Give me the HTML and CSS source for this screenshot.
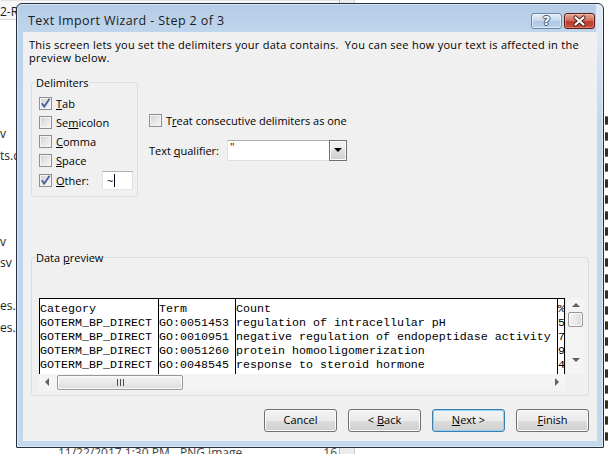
FILE: index.html
```html
<!DOCTYPE html>
<html>
<head>
<meta charset="utf-8">
<title>Text Import Wizard</title>
<link rel="stylesheet" href="styles.css">
</head>
<body>
<div class="desktop">
  <div class="explorer">
    <div class="ex-list-pane">
      <div class="ex-top"><span>2-R</span></div>
      <ul class="ex-list">
        <li>v</li><li>ts.csv</li><li></li><li></li><li></li><li>v</li><li>sv</li><li></li><li>es.xlsx</li><li>es.csv</li>
      </ul>
      <div class="ex-bottom"><span class="ex-date">11/22/2017 1:30 PM</span><span class="ex-type">PNG image</span><span class="ex-size">16</span></div>
    </div>
    <div class="ex-scroll"></div>
    <div class="ex-right"></div>
  </div>

  <div class="dialog">
    <div class="titlebar">
      <span class="title">Text Import Wizard - Step 2 of 3</span>
      <div class="caption-btns">
        <span class="cbtn help">?</span>
        <span class="cbtn close"><svg width="29" height="14" viewBox="0 0 29 14"><path d="M10.5 3.5 L18.5 10.5 M18.5 3.5 L10.5 10.5" stroke="#4a2420" stroke-width="4.2" stroke-linecap="round" fill="none"/><path d="M10.5 3.5 L18.5 10.5 M18.5 3.5 L10.5 10.5" stroke="#fff" stroke-width="2.2" stroke-linecap="round" fill="none"/></svg></span>
      </div>
    </div>

    <div class="client">
      <p class="intro">This screen lets you set the delimiters your data contains.&nbsp; You can see how your text is affected in the<br>preview below.</p>

      <div class="options">
        <fieldset class="group delims">
          <legend>Delimiters</legend>
          <div class="chk"><span class="box"><svg width="11" height="11" viewBox="0 0 11 11"><path d="M1.8 5.2 L4.2 8.6 L9.6 0.8" stroke="#4a5f97" stroke-width="1.8" fill="none"/></svg></span><span><u>T</u>ab</span></div>
          <div class="chk"><span class="box"></span><span>Se<u>m</u>icolon</span></div>
          <div class="chk"><span class="box"></span><span><u>C</u>omma</span></div>
          <div class="chk"><span class="box"></span><span><u>S</u>pace</span></div>
          <div class="chk other"><span class="box"><svg width="11" height="11" viewBox="0 0 11 11"><path d="M1.8 5.2 L4.2 8.6 L9.6 0.8" stroke="#4a5f97" stroke-width="1.8" fill="none"/></svg></span><span><u>O</u>ther:</span><span class="textbox">~<i class="caret"></i></span></div>
        </fieldset>

        <div class="right-opts">
          <div class="chk treat"><span class="box"></span><span>T<u>r</u>eat consecutive delimiters as one</span></div>
          <div class="qual">
            <span class="qual-label">Text <u>q</u>ualifier:</span>
            <div class="combo"><span class="combo-val">"</span><span class="drop"><i class="tri-down"></i></span></div>
          </div>
        </div>
      </div>

      <fieldset class="group preview-group">
        <legend>Data <u>p</u>review</legend>
        <div class="preview">
          <div class="grid">
            <div class="col c1">Category
GOTERM_BP_DIRECT
GOTERM_BP_DIRECT
GOTERM_BP_DIRECT
GOTERM_BP_DIRECT</div>
            <div class="col c2">Term
GO:0051453
GO:0010951
GO:0051260
GO:0048545</div>
            <div class="col c3">Count
regulation of intracellular pH
negative regulation of endopeptidase activity
protein homooligomerization
response to steroid hormone</div>
            <div class="col c4">%
5
7
9
4</div>
          </div>
          <div class="vscroll">
            <i class="arr-up"></i>
            <span class="vthumb"></span>
            <i class="arr-down"></i>
          </div>
          <div class="hscroll">
            <i class="arr-left"></i>
            <span class="hthumb"><i class="grip"></i></span>
            <i class="arr-right"></i>
          </div>
          <div class="corner"></div>
        </div>
      </fieldset>

      <div class="buttons">
        <span class="btn"><span>Cancel</span></span>
        <span class="btn"><span>&lt; <u>B</u>ack</span></span>
        <span class="btn default"><span><u>N</u>ext &gt;</span></span>
        <span class="btn"><span><u>F</u>inish</span></span>
      </div>
    </div>
  </div>
</div>
</body>
</html>
```

FILE: styles.css
```css
* { box-sizing: border-box; }
html, body { margin: 0; padding: 0; }
body {
  width: 615px;
  height: 454px;
  overflow: hidden;
  background: #fff;
  font-family: "Open Sans", "Noto Sans", sans-serif;
  font-size: 11px;
  color: #000;
}
.desktop {
  position: relative;
  width: 615px;
  height: 454px;
  overflow: hidden;
  background: #fff;
}

/* background explorer window */
.explorer {
  display: grid;
  grid-template-columns: 339px 16px 1fr;
  height: 454px;
}
.ex-list-pane { display: flex; flex-direction: column; }
.ex-top {
  height: 20px;
  border-bottom: 1px solid #d6d6d6;
  line-height: 22px;
  font-size: 12px;
  color: #1e1e1e;
  border-top: 1px solid #e2e2e2;
  background: #f7f7f7;
}
.ex-list {
  list-style: none;
  margin: 0;
  padding: 103px 0 0 0;
  font-size: 12px;
  line-height: 21.5px;
  color: #1e1e1e;
}
.ex-list li { height: 21.5px; white-space: nowrap; }
.ex-bottom {
  margin-top: 107px;
  display: flex;
  font-size: 12px;
  line-height: 16px;
  color: #444;
  white-space: nowrap;
}
.ex-date { margin-left: 58px; width: 122px; }
.ex-type { width: 135px; }
.ex-size { width: 22px; text-align: right; }
.ex-scroll {
  background: #ececec;
  border-left: 1px solid #bcbcbc;
  border-right: 1px solid #d0d0d0;
}
.ex-right {
  background-color: #fff;
  background-image: repeating-linear-gradient(to bottom, #8a7866 0 1px, #3a2d22 1px 8px, #8a7866 8px 9px, transparent 9px 15.8px);
  background-size: 3px 330px;
  background-position: 250px 116px;
  background-repeat: no-repeat;
}

/* dialog window */
.dialog {
  position: absolute;
  left: 16px;
  top: 3px;
  width: 588px;
  height: 445px;
  border: 1px solid #26303c;
  border-radius: 6px 6px 1px 1px;
  padding: 0 6px 6px 6px;
  background:
    linear-gradient(to bottom, rgba(255,255,255,0.6), rgba(255,255,255,0)) right 0 top 0 / 7px 130px no-repeat,
    linear-gradient(to bottom, #b4cce6 0, #bfd5ec 28px, #c3d7ed 100%);
  box-shadow: inset 0 0 0 1px rgba(255,255,255,0.45);
}
.titlebar {
  height: 28px;
  display: flex;
  align-items: center;
  justify-content: space-between;
  padding: 5px 2px 0 5px;
}
.title {
  font-size: 12.5px;
  letter-spacing: 0.4px;
  color: #1b1b1b;
}
.caption-btns { display: flex; gap: 2px; }
.cbtn {
  width: 31px;
  height: 16px;
  border-radius: 3px;
  display: flex;
  align-items: center;
  justify-content: center;
}
.help {
  border: 1px solid #6f86a3;
  background: linear-gradient(to bottom, #e3edf8 0%, #c9daee 45%, #afc7e2 55%, #bed3ea 100%);
  box-shadow: inset 0 0 0 1px rgba(255,255,255,0.5);
  color: #fff;
  font-family: "DejaVu Sans", sans-serif;
  font-weight: bold;
  font-size: 13px;
  line-height: 14px;
  text-shadow: 1px 0 0 #3e5169, -1px 0 0 #3e5169, 0 1px 0 #3e5169, 0 -1px 0 #3e5169;
}
.close {
  border: 1px solid #5c1d1a;
  background: linear-gradient(to bottom, #e8a795 0%, #d0705f 45%, #bd3b2b 55%, #c9523f 100%);
  box-shadow: inset 0 0 0 1px rgba(255,220,210,0.35);
}
.close svg { display: block; }

.client {
  height: 409px;
  background: #f0f0f0;
  padding: 6px 8px 0 8px;
  display: flex;
  flex-direction: column;
}
.intro {
  margin: 0 0 0 -2px;
  line-height: 13px;
  letter-spacing: 0.27px;
  white-space: nowrap;
}

.options {
  display: flex;
  margin-top: 11px;
  gap: 11px;
}
.group {
  margin: 0;
  border: 1px solid #d5dfe5;
  border-radius: 3px;
  min-width: 0;
}
.group > legend {
  padding: 0 1px;
  margin-left: -4px;
  line-height: 15px;
}
.delims {
  width: 107px;
  padding: 4px 4px 5px 7px;
}
.chk {
  display: flex;
  align-items: center;
  height: 19px;
  white-space: nowrap;
}
.box {
  width: 13px;
  height: 13px;
  flex: none;
  margin-right: 4px;
  border: 1px solid #8e8f8f;
  background: linear-gradient(135deg, #cfcfcf 0%, #e6e6e6 50%, #f7f7f7 100%);
  box-shadow: inset 0 0 0 1px #f4f4f4;
  position: relative;
}
.box svg { position: absolute; left: 0; top: 0; }
.chk.other { height: 21px; }
.textbox {
  margin-left: auto;
  width: 31px;
  height: 19px;
  background: #fff;
  border: 1px solid #abadb3;
  border-color: #abadb3 #dbdfe6 #e3e9ef #e2e3ea;
  padding-left: 4px;
  line-height: 17px;
  display: flex;
  align-items: center;
}
.caret {
  display: block;
  width: 1px;
  height: 13px;
  background: #000;
  margin-left: 1px;
}

.right-opts { padding-top: 38px; }
.treat { height: 15px; }
.qual {
  display: flex;
  align-items: center;
  margin-top: 11.5px;
}
.qual-label { width: 78px; flex: none; }
.combo {
  width: 120px;
  height: 21px;
  background: #fff;
  border: 1px solid #abadb3;
  border-color: #abadb3 #abadb3 #dbdfe6 #e2e3ea;
  display: flex;
  justify-content: space-between;
}
.combo-val { padding-left: 2px; line-height: 12px; }
.drop {
  width: 18px;
  margin: -1px -1px -1px 0;
  border: 1px solid #707070;
  background: linear-gradient(to bottom, #f2f2f2 0%, #ebebeb 50%, #dddddd 50%, #cfcfcf 100%);
  box-shadow: inset 0 0 0 1px #fcfcfc;
  display: flex;
  align-items: center;
  justify-content: center;
}
.tri-down {
  width: 0;
  height: 0;
  border-left: 4px solid transparent;
  border-right: 4px solid transparent;
  border-top: 4px solid #000;
}

.preview-group {
  margin-top: 53px;
  padding: 32.5px 5px 4px 7px;
}
.preview {
  display: grid;
  grid-template-columns: 526px 19px;
  grid-template-rows: 76px 17px;
}
.grid {
  display: flex;
  background: #fff;
  border-top: 1px solid #000;
  font-family: "Liberation Mono", "Courier New", monospace;
  font-size: 11.67px;
  line-height: 14px;
  white-space: pre;
  overflow: hidden;
}
.col {
  border-left: 1px solid #000;
  padding: 3px 0 0 0;
  overflow: hidden;
}
.c1 { width: 119px; }
.c2 { width: 77px; }
.c3 { width: 322px; }
.c4 { width: 8px; border-right: 1px solid #000; }

.vscroll {
  background: #f4f4f4;
  border-left: 1px solid #e8e8e8;
  display: flex;
  flex-direction: column;
  align-items: center;
  padding: 5px 0 0 0;
}
.arr-up, .arr-down {
  width: 0; height: 0;
  border-left: 4px solid transparent;
  border-right: 4px solid transparent;
}
.arr-up { border-bottom: 4px solid #606060; margin-left: 2px; }
.arr-down { border-top: 4px solid #606060; margin-left: 2px; margin-top: 31px; }
.vthumb {
  width: 15px;
  height: 15px;
  margin: 5px 0 0 0;
  border: 1px solid #979797;
  border-radius: 2px;
  background: linear-gradient(to right, #f3f3f3 0%, #e9e9e9 50%, #dcdcdc 100%);
  box-shadow: inset 0 0 0 1px #fafafa;
}
.hscroll {
  background: #f4f4f4;
  display: flex;
  align-items: center;
  padding-left: 6px;
}
.arr-left, .arr-right {
  width: 0; height: 0;
  border-top: 4px solid transparent;
  border-bottom: 4px solid transparent;
}
.arr-left { border-right: 4px solid #606060; }
.arr-right { border-left: 4px solid #606060; margin-left: auto; margin-right: 6px; }
.hthumb {
  width: 126px;
  height: 15px;
  margin-left: 8px;
  border: 1px solid #979797;
  border-radius: 2px;
  background: linear-gradient(to bottom, #f3f3f3 0%, #e9e9e9 50%, #dcdcdc 100%);
  box-shadow: inset 0 0 0 1px #fafafa;
  display: flex;
  align-items: center;
  justify-content: center;
}
.grip {
  width: 7px;
  height: 7px;
  background: repeating-linear-gradient(to right, #4d4d4d 0 1px, #e8e8e8 1px 3px);
}
.corner { background: #f0f0f0; }

.buttons {
  display: flex;
  justify-content: flex-end;
  gap: 11px;
  margin-top: 13px;
}
.btn {
  width: 73px;
  height: 23px;
  border: 1px solid #707070;
  border-radius: 3px;
  background: linear-gradient(to bottom, #f2f2f2 0%, #ebebeb 50%, #dddddd 50%, #cfcfcf 100%);
  box-shadow: inset 0 0 0 1px #fcfcfc;
  display: flex;
  align-items: center;
  justify-content: center;
  line-height: 14px;
  white-space: pre;
}
.btn.default {
  border-color: #3c7fb1;
  box-shadow: inset 0 0 0 1px #8fd3f6;
}
u { text-decoration-thickness: 1px; text-underline-offset: 1px; }
```
